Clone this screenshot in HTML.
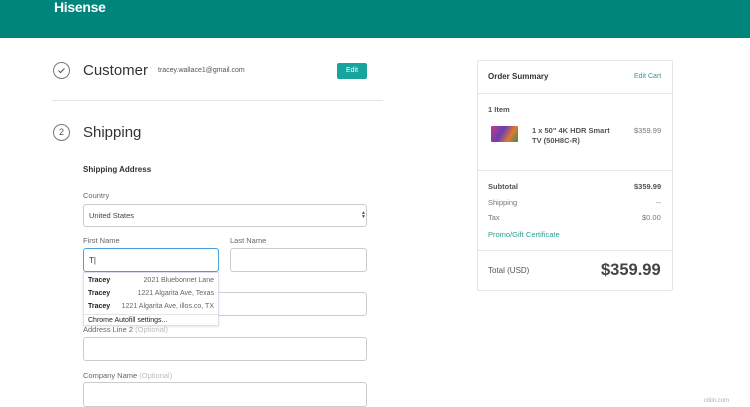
<!DOCTYPE html>
<html><head><meta charset="utf-8"><style>
*{margin:0;padding:0;box-sizing:border-box}
body{width:750px;height:407px;overflow:hidden;background:#fff;font-family:"Liberation Sans",Arial,sans-serif;color:#333;position:relative}
.a{position:absolute;white-space:nowrap}
.hdr{position:absolute;left:0;top:0;width:750px;height:38px;background:#00857b}
.logo{left:54px;top:-1px;color:#fff;font-weight:bold;font-size:14px;letter-spacing:-0.3px}
.circ{position:absolute;width:17px;height:17px;border:1px solid #777;border-radius:50%;font-size:9px;color:#555;text-align:center;line-height:15px}
.h2{font-size:15px;color:#333}
.lbl{font-size:7.5px;color:#666}
.inp{position:absolute;border:1px solid #ccc;border-radius:3px;background:#fff}
.opt{color:#bbb}
.gr{font-size:7.5px;color:#555}
.b{font-weight:bold}
.hr{position:absolute;height:1px;background:#e6e6e6}
</style></head><body>
<div class="hdr"></div>
<div class="a logo">Hisense</div>

<div class="circ" style="left:53px;top:62px"><svg width="15" height="15" viewBox="0 0 15 15"><path d="M4.5 7.5l2 2 4-4" stroke="#555" stroke-width="1" fill="none"/></svg></div>
<div class="a h2" style="left:83px;top:62px">Customer</div>
<div class="a" style="left:158px;top:67px;font-size:7px;color:#555">tracey.wallace1@gmail.com</div>
<div class="a" style="left:337px;top:63px;width:30px;height:16px;background:#17a39e;border-radius:2px"><span class="a" style="left:9px;top:4px;color:#fff;font-size:7px;line-height:8px">Edit</span></div>
<div class="hr" style="left:52px;top:100px;width:331px"></div>

<div class="circ" style="left:53px;top:124px">2</div>
<div class="a h2" style="left:83px;top:124px">Shipping</div>
<div class="a b" style="left:83px;top:165px;font-size:8px;color:#333">Shipping Address</div>

<div class="a lbl" style="left:83px;top:191px">Country</div>
<div class="inp" style="left:83px;top:204px;width:284px;height:23px"></div>
<div class="a" style="left:89px;top:211px;font-size:7.5px;color:#444">United States</div>
<div class="a" style="left:361px;top:211px;font-size:5px;color:#555;line-height:4px">▲<br>▼</div>

<div class="a lbl" style="left:83px;top:236px">First Name</div>
<div class="a lbl" style="left:230px;top:236px">Last Name</div>
<div class="inp" style="left:83px;top:248px;width:136px;height:24px;border-color:#4aa0d8"></div>
<div class="a" style="left:89px;top:256px;font-size:8px;color:#333">T|</div>
<div class="inp" style="left:230px;top:248px;width:137px;height:24px"></div>

<div class="inp" style="left:83px;top:292px;width:284px;height:24px"></div>
<div class="a lbl" style="left:83px;top:325px">Address Line 2 <span class="opt">(Optional)</span></div>

<div class="a" style="left:83px;top:272px;width:136px;height:54px;background:#fff;border:1px solid #dde;box-shadow:0 1px 2px rgba(0,0,0,.1)">
<div class="a b" style="left:4px;top:4px;font-size:7px;color:#222">Tracey</div><div class="a" style="right:4px;top:4px;font-size:7px;color:#666">2021 Bluebonnet Lane</div>
<div class="a b" style="left:4px;top:17px;font-size:7px;color:#222">Tracey</div><div class="a" style="right:4px;top:17px;font-size:7px;color:#666">1221 Algarita Ave, Texas</div>
<div class="a b" style="left:4px;top:30px;font-size:7px;color:#222">Tracey</div><div class="a" style="right:4px;top:30px;font-size:7px;color:#666">1221 Algarita Ave, illos.co, TX</div>
<div class="a" style="left:0;top:41px;width:134px;height:1px;background:#e5e5e5"></div>
<div class="a" style="left:4px;top:44px;font-size:7px;color:#222">Chrome Autofill settings...</div>
</div>

<div class="inp" style="left:83px;top:337px;width:284px;height:24px"></div>
<div class="a lbl" style="left:83px;top:371px">Company Name <span class="opt">(Optional)</span></div>
<div class="inp" style="left:83px;top:382px;width:284px;height:25px"></div>

<div class="a" style="left:477px;top:60px;width:196px;height:231px;border:1px solid #e6e6e6;border-radius:2px"></div>
<div class="a b" style="left:488px;top:72px;font-size:8px;color:#333">Order Summary</div>
<div class="a" style="left:634px;top:73px;font-size:7px;color:#2a9d95">Edit Cart</div>
<div class="hr" style="left:478px;top:93px;width:194px"></div>
<div class="a b gr" style="left:488px;top:105px">1 Item</div>
<div class="a" style="left:491px;top:126px;width:27px;height:16px;background:linear-gradient(120deg,#c23a8a,#6a3fb0 40%,#e07a30 70%,#3a8a50);border-radius:1px"></div>
<div class="a b gr" style="left:532px;top:126px;line-height:10px">1 x 50" 4K HDR Smart<br>TV (50H8C-R)</div>
<div class="a gr" style="left:634px;top:126px;color:#777">$359.99</div>
<div class="hr" style="left:478px;top:170px;width:194px"></div>
<div class="a b gr" style="left:488px;top:182px">Subtotal</div><div class="a b gr" style="left:634px;top:182px">$359.99</div>
<div class="a gr" style="left:488px;top:198px;color:#777">Shipping</div><div class="a gr" style="left:656px;top:198px;color:#777">--</div>
<div class="a gr" style="left:488px;top:213px;color:#777">Tax</div><div class="a gr" style="left:642px;top:213px;color:#777">$0.00</div>
<div class="a gr" style="left:488px;top:230px;color:#2a9d95">Promo/Gift Certificate</div>
<div class="hr" style="left:478px;top:250px;width:194px"></div>
<div class="a" style="left:488px;top:266px;font-size:8px;color:#555">Total (USD)</div>
<div class="a b" style="left:601px;top:261px;font-size:16.5px;color:#444">$359.99</div>
<div class="a" style="left:704px;top:398px;font-size:6px;color:#aaa">citiin.com</div>
</body></html>
